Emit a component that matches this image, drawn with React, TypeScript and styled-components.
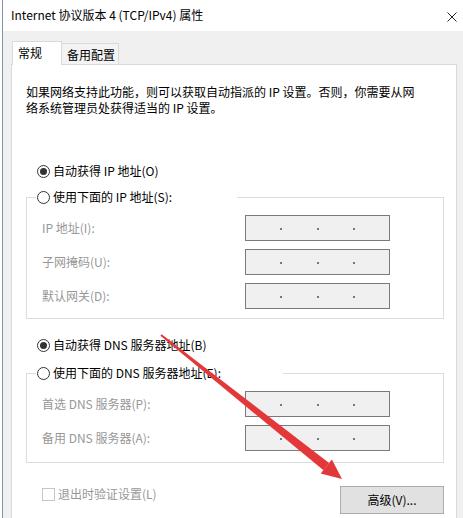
import styled, { createGlobalStyle } from "styled-components";

const GlobalStyle = createGlobalStyle`
  html, body {
    margin: 0;
    padding: 0;
    background: #ffffff;
  }

  body {
    font-family: "Noto Sans CJK SC", "Noto Sans", sans-serif;
    font-size: 12px;
    color: #000;
  }

  * {
    box-sizing: border-box;
  }
`;

const ipFields = ["IP 地址(I):", "子网掩码(U):", "默认网关(D):"];
const dnsFields = ["首选 DNS 服务器(P):", "备用 DNS 服务器(A):"];

const AddressField = () => (
    <AddressBox>
        <Dot />
        <Dot />
        <Dot />
    </AddressBox>
);

const Fields = ({ labels }: { labels: string[] }) => (
    <FieldGrid>
        {labels.map((label) => (
            <Fragmentless key={label}>
                <FieldLabel>{label}</FieldLabel>
                <AddressField />
            </Fragmentless>
        ))}
    </FieldGrid>
);

export default function App() {
    return (
        <>
            <GlobalStyle />
            <Page>
                <Window>
                    <TitleBar>
                        <TitleText>Internet 协议版本 4 (TCP/IPv4) 属性</TitleText>
                        <CloseIcon width="10" height="10" viewBox="0 0 10 10">
                            <path d="M0.5 0.5 L9.5 9.5 M9.5 0.5 L0.5 9.5" stroke="#222" strokeWidth="1" fill="none" />
                        </CloseIcon>
                    </TitleBar>

                    <TabRow>
                        <Tab $active>常规</Tab>
                        <Tab $active={false}>备用配置</Tab>
                    </TabRow>

                    <Panel>
                        <Description>
                            如果网络支持此功能，则可以获取自动指派的 IP 设置。否则，你需要从网
                            <br />
                            络系统管理员处获得适当的 IP 设置。
                        </Description>

                        <RadioRow $top={47}>
                            <RadioMark $checked />
                            自动获得 IP 地址(O)
                        </RadioRow>

                        <Group $top={10} $bottom={9}>
                            <Legend $width={201}>
                                <RadioMark $checked={false} />
                                使用下面的 IP 地址(S):
                            </Legend>
                            <Fields labels={ipFields} />
                        </Group>

                        <RadioRow $top={18}>
                            <RadioMark $checked />
                            自动获得 DNS 服务器地址(B)
                        </RadioRow>

                        <Group $top={12} $bottom={11}>
                            <Legend $width={247}>
                                <RadioMark $checked={false} />
                                使用下面的 DNS 服务器地址(E):
                            </Legend>
                            <Fields labels={dnsFields} />
                        </Group>

                        <Footer>
                            <CheckRow>
                                <CheckMark />
                                退出时验证设置(L)
                            </CheckRow>
                            <Button type="button">高级(V)...</Button>
                        </Footer>
                    </Panel>
                </Window>

                <Annotation width="463" height="518" viewBox="0 0 463 518">
                    <polygon
                        points="160.4,335.8 161.6,334.2 329.1,462.9 323.5,470.3"
                        fill="#e3383a"
                    />
                    <polygon
                        points="342,479 320.7,473.6 331.9,459.6"
                        fill="#e3383a"
                    />
                </Annotation>
            </Page>
        </>
    );
}

const Fragmentless = styled.div`
    display: contents;
`;

const Page = styled.div`
    position: relative;
    width: 463px;
    height: 518px;
    overflow: hidden;
`;

const Window = styled.div`
    margin-left: 2px;
    width: 461px;
    height: 518px;

    display: flex;
    flex-direction: column;

    background-color: #f0f0f0;
    border-left: 1px solid #7d95b3;
`;

const TitleBar = styled.div`
    height: 31px;
    flex-shrink: 0;

    display: flex;
    align-items: center;
    justify-content: space-between;

    padding: 0 6px 0 8px;
    background-color: #ffffff;
`;

const TitleText = styled.div`
    font-size: 12px;
    line-height: 16px;
    margin-top: -1px;
`;

const CloseIcon = styled.svg`
    display: block;
    margin-top: 2px;
`;

const TabRow = styled.div`
    display: flex;
    align-items: flex-end;

    margin: 10px 0 0 9px;
`;

const Tab = styled.div<{ $active: boolean }>`
    position: relative;

    display: flex;
    align-items: center;

    font-size: 12px;
    line-height: 16px;

    border: 1px solid #d9d9d9;
    border-bottom: none;

    ${({ $active }) =>
        $active
            ? `
            z-index: 1;
            width: 50px;
            height: 24px;
            padding: 0 0 2px 5px;
            margin-bottom: -1px;
            background-color: #ffffff;
        `
            : `
            width: 58px;
            height: 21px;
            padding: 1px 0 0 5px;
            margin-left: -1px;
            background-color: #f3f3f3;
        `};
`;

const Panel = styled.div`
    flex: 1;
    width: 446px;
    margin-left: 8px;

    display: flex;
    flex-direction: column;

    padding: 19px 12px 0 14px;

    background-color: #ffffff;
    border: 1px solid #d9d9d9;
    border-bottom: none;
`;

const Description = styled.div`
    font-size: 12px;
    line-height: 16px;
`;

const RadioRow = styled.div<{ $top: number }>`
    height: 16px;
    margin-top: ${({ $top }) => $top}px;
    padding-left: 11px;

    display: flex;
    align-items: center;
    gap: 3px;

    line-height: 16px;
`;

const RadioMark = styled.span<{ $checked: boolean }>`
    position: relative;
    flex-shrink: 0;

    width: 13px;
    height: 13px;

    border: 1px solid #333333;
    border-radius: 50%;
    background-color: #ffffff;

    ${({ $checked }) =>
        $checked &&
        `
        &::after {
            content: "";
            position: absolute;
            left: 2px;
            top: 2px;
            width: 7px;
            height: 7px;
            border-radius: 50%;
            background-color: #333333;
        }
    `};
`;

const Group = styled.fieldset<{ $top: number; $bottom: number }>`
    min-width: 0;
    margin: ${({ $top }) => $top}px 0 0 0;
    padding: 10px 15px ${({ $bottom }) => $bottom}px 15px;

    border: 1px solid #dcdcdc;
`;

const Legend = styled.legend<{ $width: number }>`
    width: ${({ $width }) => $width}px;
    height: 16px;

    display: flex;
    align-items: center;
    gap: 3px;

    margin-left: -6px;
    padding: 0 0 0 1px;

    line-height: 16px;
`;

const FieldGrid = styled.div`
    display: grid;
    grid-template-columns: 203px 145px;
    grid-auto-rows: 26px;
    row-gap: 8px;
    align-items: center;
`;

const FieldLabel = styled.div`
    color: #979797;
    line-height: 16px;
`;

const AddressBox = styled.div`
    height: 26px;

    display: flex;
    align-items: center;
    justify-content: space-evenly;

    padding-top: 1px;

    background-color: #f0f0f0;
    border: 1px solid #7a7a7a;
`;

const Dot = styled.span`
    width: 2px;
    height: 2px;
    background-color: #777777;
`;

const Footer = styled.div`
    display: flex;
    align-items: flex-start;
    justify-content: space-between;

    margin-top: 23px;
`;

const CheckRow = styled.div`
    height: 16px;
    padding-left: 16px;

    display: flex;
    align-items: center;
    gap: 3px;

    color: #979797;
    line-height: 16px;
`;

const CheckMark = styled.span`
    width: 13px;
    height: 13px;

    background-color: #ffffff;
    border: 1px solid #c6c6c6;
`;

const Button = styled.button`
    width: 104px;
    height: 28px;
    padding: 0;

    font-family: inherit;
    font-size: 12px;
    line-height: 16px;
    color: #000;

    background-color: #e1e1e1;
    border: 1px solid #adadad;
`;

const Annotation = styled.svg`
    position: absolute;
    left: 0;
    top: 0;
    pointer-events: none;
`;
